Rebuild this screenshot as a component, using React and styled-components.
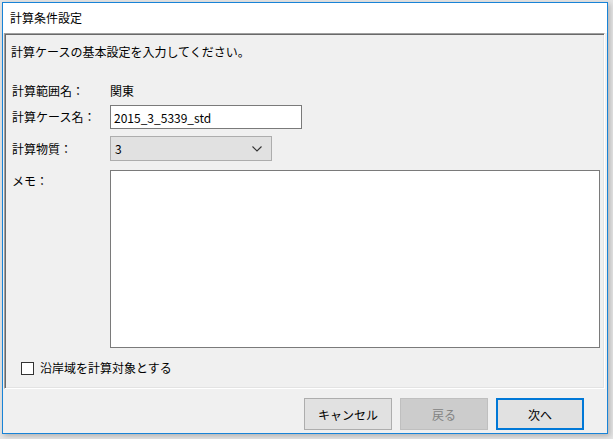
import React, { useState } from 'react';
import styled, { createGlobalStyle } from 'styled-components';

const GlobalStyle = createGlobalStyle`
  html, body {
    margin: 0;
    padding: 0;
    background: #e4e4e4;
  }
  body {
    font-family: "Noto Sans CJK JP", "Noto Sans", sans-serif;
    font-size: 12px;
    color: #000;
  }
`;

function App() {
  const [caseName, setCaseName] = useState('2015_3_5339_std');
  const [coastal, setCoastal] = useState(false);

  return (
    <>
      <GlobalStyle />
      <Screen>
        <Window>
          <TitleBar>計算条件設定</TitleBar>
          <Panel>
            <Intro>計算ケースの基本設定を入力してください。</Intro>

            <Row $h={24} $top={19}>
              <Label>計算範囲名：</Label>
              <span>関東</span>
            </Row>

            <Row $h={24} $top={2}>
              <Label>計算ケース名：</Label>
              <TextInput
                value={caseName}
                onChange={(e) => setCaseName(e.target.value)}
              />
            </Row>

            <Row $h={25} $top={7}>
              <Label>計算物質：</Label>
              <Select>
                <span>3</span>
                <svg width="10" height="6" viewBox="0 0 10 6">
                  <polyline
                    points="0.5,0.5 5,5 9.5,0.5"
                    fill="none"
                    stroke="#333"
                    strokeWidth="1.1"
                  />
                </svg>
              </Select>
            </Row>

            <Row $h={178} $top={9} $alignTop>
              <Label $pad={3}>メモ：</Label>
              <Memo />
            </Row>

            <CheckRow onClick={() => setCoastal(!coastal)}>
              <CheckBox>{coastal ? '✓' : ''}</CheckBox>
              沿岸域を計算対象とする
            </CheckRow>
          </Panel>
          <Footer>
            <Button>キャンセル</Button>
            <Button disabled>戻る</Button>
            <Button $primary>次へ</Button>
          </Footer>
        </Window>
      </Screen>
    </>
  );
}

const Screen = styled.div`
  width: 613px;
  height: 439px;
  padding: 2px 0 0 2px;
  box-sizing: border-box;
`;

const Window = styled.div`
  width: 606px;
  height: 432px;
  box-sizing: border-box;
  border: 1px solid #1883d7;
  background: #f0f0f0;
  box-shadow: 2px 2px 5px rgba(0, 0, 0, 0.22);
  display: flex;
  flex-direction: column;
`;

const TitleBar = styled.div`
  height: 30px;
  background: #fff;
  display: flex;
  align-items: center;
  padding-left: 7px;
  font-size: 12px;
  line-height: 16px;
`;

const Panel = styled.div`
  height: 356px;
  margin: 0 2px 0 1px;
  box-sizing: border-box;
  border-top: 1px solid #a0a0a0;
  border-left: 1px solid #a0a0a0;
  border-right: 1px solid #fff;
  border-bottom: 1px solid #fff;
  box-shadow: inset 1px 1px 0 #696969, inset -1px -1px 0 #e3e3e3;
  padding: 10px 3px 0 5px;
  display: flex;
  flex-direction: column;
`;

const Intro = styled.div`
  line-height: 16px;
  padding-left: 1px;
`;

const Row = styled.div`
  display: flex;
  align-items: ${(p) => (p.$alignTop ? 'flex-start' : 'center')};
  height: ${(p) => p.$h}px;
  margin-top: ${(p) => p.$top}px;
  padding-left: 2px;
  line-height: 16px;
  flex-shrink: 0;
`;

const Label = styled.div`
  width: 98px;
  flex-shrink: 0;
  line-height: 16px;
  padding-top: ${(p) => p.$pad || 0}px;
`;

const TextInput = styled.input`
  width: 192px;
  height: 24px;
  box-sizing: border-box;
  border: 1px solid #7a7a7a;
  background: #fff;
  padding: 0 3px;
  font-family: inherit;
  font-size: 12px;
  color: #000;
  outline: none;
`;

const Select = styled.div`
  width: 162px;
  height: 25px;
  box-sizing: border-box;
  border: 1px solid #adadad;
  background: #e1e1e1;
  display: flex;
  align-items: center;
  justify-content: space-between;
  padding: 0 9px 0 4px;
  svg {
    display: block;
    margin-top: 1px;
  }
`;

const Memo = styled.textarea`
  width: 490px;
  height: 178px;
  box-sizing: border-box;
  border: 1px solid #7a7a7a;
  background: #fff;
  resize: none;
  font-family: inherit;
  font-size: 12px;
  outline: none;
  margin: 0;
`;

const CheckRow = styled.label`
  display: flex;
  align-items: center;
  gap: 6px;
  height: 16px;
  margin-top: 12px;
  padding-left: 11px;
  line-height: 16px;
  cursor: default;
`;

const CheckBox = styled.span`
  width: 13px;
  height: 13px;
  box-sizing: border-box;
  border: 1px solid #333;
  background: #fff;
  font-size: 10px;
  line-height: 11px;
  text-align: center;
`;

const Footer = styled.div`
  flex: 1;
  display: flex;
  justify-content: flex-end;
  align-items: flex-start;
  gap: 8px;
  padding: 9px 23px 0 0;
`;

const Button = styled.button`
  width: 88px;
  height: 32px;
  box-sizing: border-box;
  border: ${(p) => (p.$primary ? '2px solid #0078d7' : '1px solid #adadad')};
  background: #e1e1e1;
  font-family: inherit;
  font-size: 12px;
  color: #000;
  padding: 0;
  &:disabled {
    background: #cccccc;
    border-color: #bfbfbf;
    color: #838383;
  }
`;

export default App;
